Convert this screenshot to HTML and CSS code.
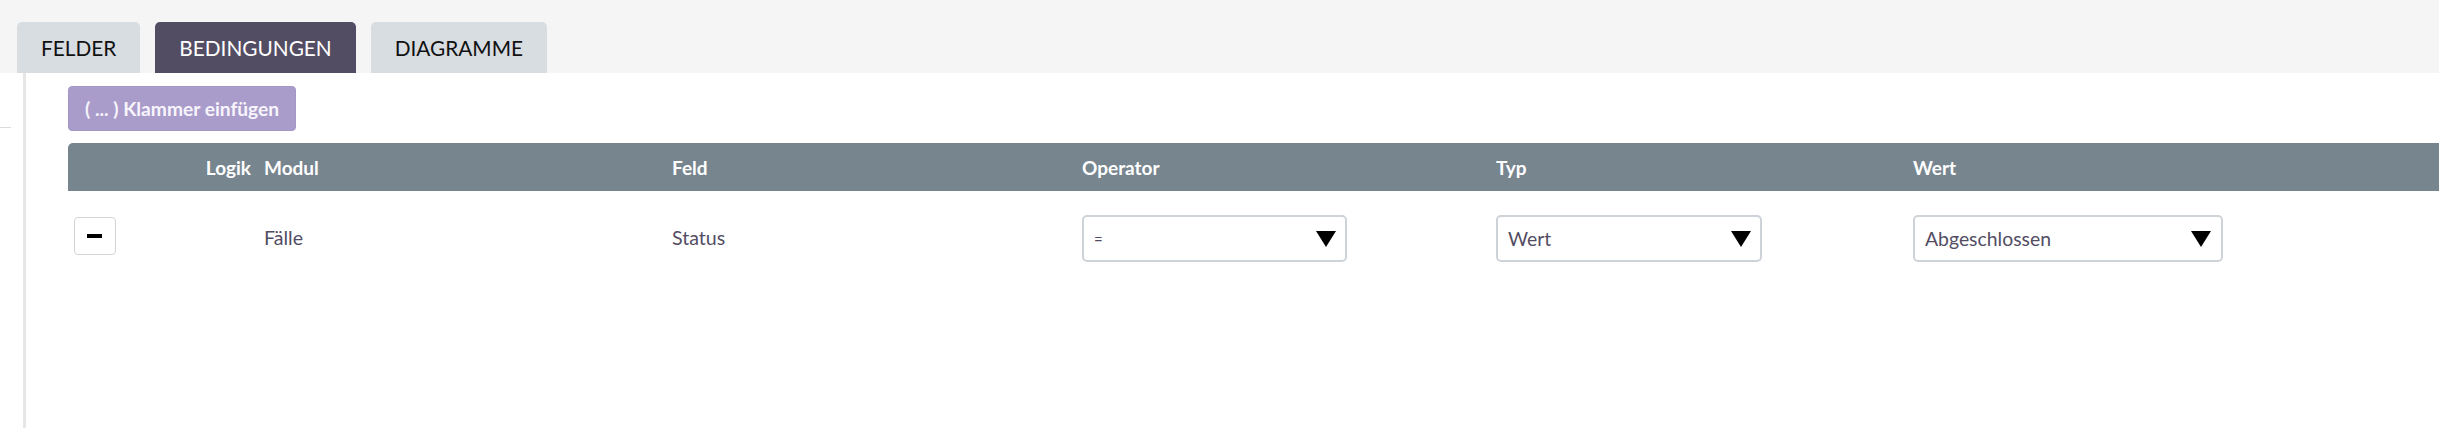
FILE: index.html
```html
<!DOCTYPE html>
<html lang="de">
<head>
<meta charset="utf-8">
<title>Bedingungen</title>
<link rel="stylesheet" href="styles.css">
</head>
<body>
<div class="tabs">
  <div class="tab">Felder</div>
  <div class="tab active">Bedingungen</div>
  <div class="tab">Diagramme</div>
</div>
<div class="main">
  <div class="side"><div class="side-line"></div></div>
  <div class="panel">
    <button class="bracket-btn">( ... ) Klammer einfügen</button>
    <div class="table">
      <div class="grid head">
        <div class="cell c-btn"></div>
        <div class="cell c-logic">Logik</div>
        <div class="cell">Modul</div>
        <div class="cell">Feld</div>
        <div class="cell">Operator</div>
        <div class="cell">Typ</div>
        <div class="cell">Wert</div>
      </div>
      <div class="grid row">
        <div class="cell c-btn"><div class="remove"><span class="bar"></span></div></div>
        <div class="cell c-logic"></div>
        <div class="cell text">Fälle</div>
        <div class="cell text">Status</div>
        <div class="cell"><div class="select s-op"><span class="val">=</span><svg class="arrow" width="20" height="16" viewBox="0 0 20 16"><polygon points="0,0 20,0 10,16" fill="#000"/></svg></div></div>
        <div class="cell"><div class="select s-typ"><span>Wert</span><svg class="arrow" width="20" height="16" viewBox="0 0 20 16"><polygon points="0,0 20,0 10,16" fill="#000"/></svg></div></div>
        <div class="cell"><div class="select s-wert"><span>Abgeschlossen</span><svg class="arrow" width="20" height="16" viewBox="0 0 20 16"><polygon points="0,0 20,0 10,16" fill="#000"/></svg></div></div>
      </div>
    </div>
  </div>
</div>
</body>
</html>
```
FILE: styles.css
```css
* { box-sizing: border-box; }
html, body { margin: 0; padding: 0; background: #fff; }
body { font-family: Lato, "Open Sans", "Liberation Sans", sans-serif; color: #534d64; overflow: hidden; }

.tabs {
  height: 73px;
  background: #f5f5f5;
  display: flex;
  align-items: flex-end;
  gap: 15px;
  padding-left: 17px;
}
.tab {
  height: 51px;
  padding: 0 24px;
  display: flex;
  align-items: center;
  background: #d8dde1;
  color: #111;
  font-size: 20.8px;
  text-transform: uppercase;
  border-radius: 5px 5px 0 0;
}
.tab.active { background: #534d64; color: #fff; }

.main { display: flex; height: 355px; }
.side { width: 23px; flex: none; }
.side-line { margin-top: 54px; width: 11px; height: 1px; background: #dcdcdc; }
.panel {
  flex: 1;
  border-left: 3px solid #e6e6e6;
  padding: 13px 0 0 42px;
  min-width: 0;
}

.bracket-btn {
  height: 45px;
  padding: 0 16px 0 16px;
  background: #a99ccb;
  border: 1px solid #a397c6;
  border-radius: 4px;
  color: #f7f5fb;
  font-family: Lato, "Open Sans", sans-serif;
  font-weight: 700;
  font-size: 19.2px;
  cursor: pointer;
}

.table { margin-top: 12px; }
.grid {
  display: grid;
  grid-template-columns: 72px 117px 408px 410px 414px 417px 1fr;
}
.head {
  height: 48px;
  background: #77858f;
  border-top-left-radius: 5px;
  color: #fff;
  font-weight: 700;
  font-size: 19px;
  align-items: center;
}
.cell { padding-left: 7px; white-space: nowrap; }
.c-btn { padding-left: 6px; }
.c-logic { padding-left: 0; padding-right: 6px; text-align: right; }

.row { padding-top: 24px; height: 95px; align-items: start; }
.text { line-height: 46px; font-size: 19.6px; }

.remove {
  margin-top: 2px;
  width: 42px;
  height: 38px;
  border: 1px solid #d4d4d4;
  border-radius: 4px;
  background: #fff;
  display: flex;
  align-items: center;
  justify-content: center;
}
.bar { display: block; width: 15px; height: 4px; background: #000; margin-left: -1px; }

.select {
  height: 47px;
  border: 2px solid #cdd3d9;
  border-radius: 5px;
  display: flex;
  align-items: center;
  justify-content: space-between;
  padding: 0 9px 0 10px;
  font-size: 19.4px;
  color: #534d64;
  background: #fff;
}
.select .val { font-size: 15px; }
.s-op { width: 265px; }
.s-typ { width: 266px; }
.s-wert { width: 310px; padding-right: 10px; }
.arrow { display: block; flex: none; }
```
